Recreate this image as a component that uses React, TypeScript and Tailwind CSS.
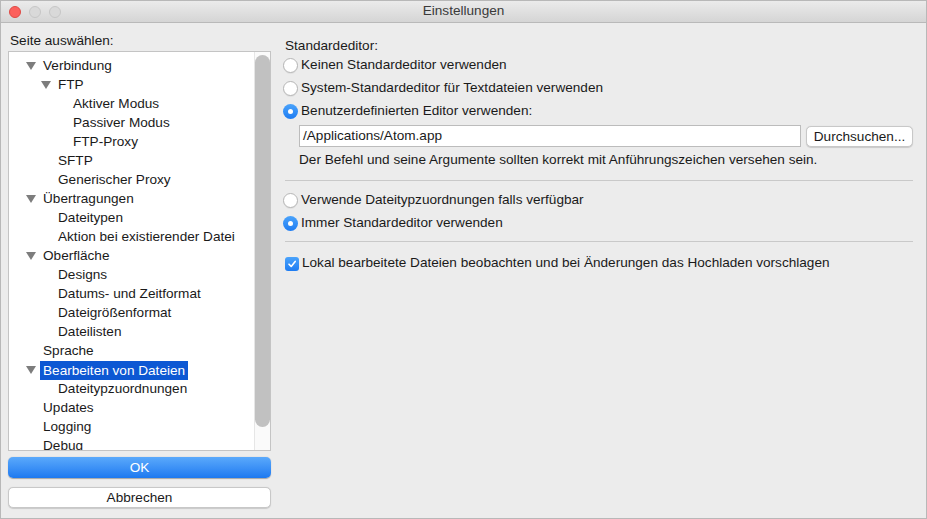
import React from 'react';

type Node = { label: string; level: number; arrow?: boolean; selected?: boolean };

const tree: Node[] = [
  { label: 'Verbindung', level: 0, arrow: true },
  { label: 'FTP', level: 1, arrow: true },
  { label: 'Aktiver Modus', level: 2 },
  { label: 'Passiver Modus', level: 2 },
  { label: 'FTP-Proxy', level: 2 },
  { label: 'SFTP', level: 1 },
  { label: 'Generischer Proxy', level: 1 },
  { label: 'Übertragungen', level: 0, arrow: true },
  { label: 'Dateitypen', level: 1 },
  { label: 'Aktion bei existierender Datei', level: 1 },
  { label: 'Oberfläche', level: 0, arrow: true },
  { label: 'Designs', level: 1 },
  { label: 'Datums- und Zeitformat', level: 1 },
  { label: 'Dateigrößenformat', level: 1 },
  { label: 'Dateilisten', level: 1 },
  { label: 'Sprache', level: 0 },
  { label: 'Bearbeiten von Dateien', level: 0, arrow: true, selected: true },
  { label: 'Dateitypzuordnungen', level: 1 },
  { label: 'Updates', level: 0 },
  { label: 'Logging', level: 0 },
  { label: 'Debug', level: 0 },
];

const indent = ['pl-[34px]', 'pl-[49px]', 'pl-[64px]'];
const arrowPos = ['left-[17px]', 'left-[32px]', 'left-[47px]'];

const Radio = ({ checked, label }: { checked?: boolean; label: string }) => (
  <div className="flex items-center h-[23px]">
    {checked ? (
      <span className="w-[15px] h-[15px] -ml-[2px] rounded-full bg-gradient-to-b from-[#4aa3fb] to-[#1d7cf2] flex items-center justify-center">
        <span className="w-[5px] h-[5px] rounded-full bg-white" />
      </span>
    ) : (
      <span className="w-[15px] h-[15px] -ml-[2px] rounded-full bg-white border border-[#b5b5b5] shadow-[0_1px_0_rgba(0,0,0,0.05)]" />
    )}
    <span className="ml-[3px]">{label}</span>
  </div>
);

export default function App() {
  return (
    <div
      className="w-[927px] h-[519px] bg-[#ececec] text-[13.6px] text-[#1a1a1a] flex flex-col overflow-hidden border border-[#b8b8b8]"
      style={{ fontFamily: '"Liberation Sans", Arial, sans-serif' }}
    >
      {/* title bar */}
      <div className="h-[22px] shrink-0 bg-gradient-to-b from-[#ebebeb] to-[#d5d5d5] border-b border-[#b9b9b9] relative flex items-center justify-center">
        <div className="absolute left-[8px] top-[5px] flex gap-[8px]">
          <span className="w-[12px] h-[12px] rounded-full bg-[#fc605c] border border-[#de4a45]" />
          <span className="w-[12px] h-[12px] rounded-full bg-[#d9d9d9] border border-[#c6c6c6]" />
          <span className="w-[12px] h-[12px] rounded-full bg-[#d9d9d9] border border-[#c6c6c6]" />
        </div>
        <span className="text-[13.6px] text-[#3a3a3a]">Einstellungen</span>
      </div>

      <div className="flex flex-1 min-h-0">
        {/* left pane */}
        <div className="w-[277px] shrink-0 pl-[7px] pr-[7px] flex flex-col">
          <div className="h-[28px] pt-[8px] pl-[2px]">Seite auswählen:</div>
          <div className="h-[400px] bg-white border border-[#c4c4c4] flex overflow-hidden">
            <div className="flex-1 pt-[5px] overflow-hidden">
              {tree.map((n) => (
                <div key={n.label} className={`relative h-[19px] flex items-center whitespace-nowrap ${indent[n.level]}`}>
                  {n.arrow && (
                    <span className={`absolute ${arrowPos[n.level]} top-[5px] w-0 h-0 border-l-[5px] border-r-[5px] border-t-[8px] border-l-transparent border-r-transparent border-t-[#7d7d7d]`} />
                  )}
                  <span className={n.selected ? 'bg-[#0d58d3] text-white px-[3px] -ml-[3px] h-[19px] leading-[19px]' : ''}>
                    {n.label}
                  </span>
                </div>
              ))}
            </div>
            <div className="w-[16px] border-l border-[#e6e6e6] bg-[#fafafa] flex justify-center pt-[3px] pb-[23px]">
              <div className="w-[8px] flex-1 rounded-full bg-[#c1c1c1]" />
            </div>
          </div>
          <button className="mt-[6px] h-[21px] rounded-[5px] bg-gradient-to-b from-[#5aa9fb] to-[#1c79f0] text-white leading-[21px] shadow-[0_0.5px_1px_rgba(0,0,0,0.3)]">
            OK
          </button>
          <button className="mt-[9px] h-[21px] rounded-[5px] bg-white border border-[#c8c8c8] leading-[19px] shadow-[0_0.5px_1px_rgba(0,0,0,0.15)]">
            Abbrechen
          </button>
        </div>

        {/* right pane */}
        <div className="flex-1 pl-[7px] pr-[13px] pt-[13px]">
          <div className="h-[18px]">Standardeditor:</div>
          <Radio label="Keinen Standardeditor verwenden" />
          <Radio label="System-Standardeditor für Textdateien verwenden" />
          <Radio checked label="Benutzerdefinierten Editor verwenden:" />
          <div className="pl-[14px] pt-[2px] flex items-center gap-[5px]">
            <div className="h-[22px] flex-1 bg-white border border-[#bcbcbc] px-[3px] leading-[20px]">/Applications/Atom.app</div>
            <button className="h-[21px] w-[107px] rounded-[5px] bg-white border border-[#c8c8c8] shadow-[0_0.5px_1px_rgba(0,0,0,0.15)]">
              Durchsuchen...
            </button>
          </div>
          <div className="pl-[14px] h-[25px] leading-[25px] whitespace-nowrap">
            Der Befehl und seine Argumente sollten korrekt mit Anführungszeichen versehen sein.
          </div>
          <div className="mt-[8px] mb-[8px] border-t border-[#c9c9c9]" />
          <Radio label="Verwende Dateitypzuordnungen falls verfügbar" />
          <Radio checked label="Immer Standardeditor verwenden" />
          <div className="mt-[6px] mb-[10px] border-t border-[#c9c9c9]" />
          <div className="flex items-center h-[23px]">
            <span className="w-[14px] h-[14px] rounded-[3px] bg-gradient-to-b from-[#4aa3fb] to-[#1d7cf2] flex items-center justify-center">
              <svg width="10" height="10" viewBox="0 0 10 10">
                <path d="M2 5.2 L4.2 7.4 L8.2 2.4" fill="none" stroke="white" strokeWidth="1.6" strokeLinecap="round" strokeLinejoin="round" />
              </svg>
            </span>
            <span className="ml-[3px] whitespace-nowrap">Lokal bearbeitete Dateien beobachten und bei Änderungen das Hochladen vorschlagen</span>
          </div>
        </div>
      </div>
    </div>
  );
}
